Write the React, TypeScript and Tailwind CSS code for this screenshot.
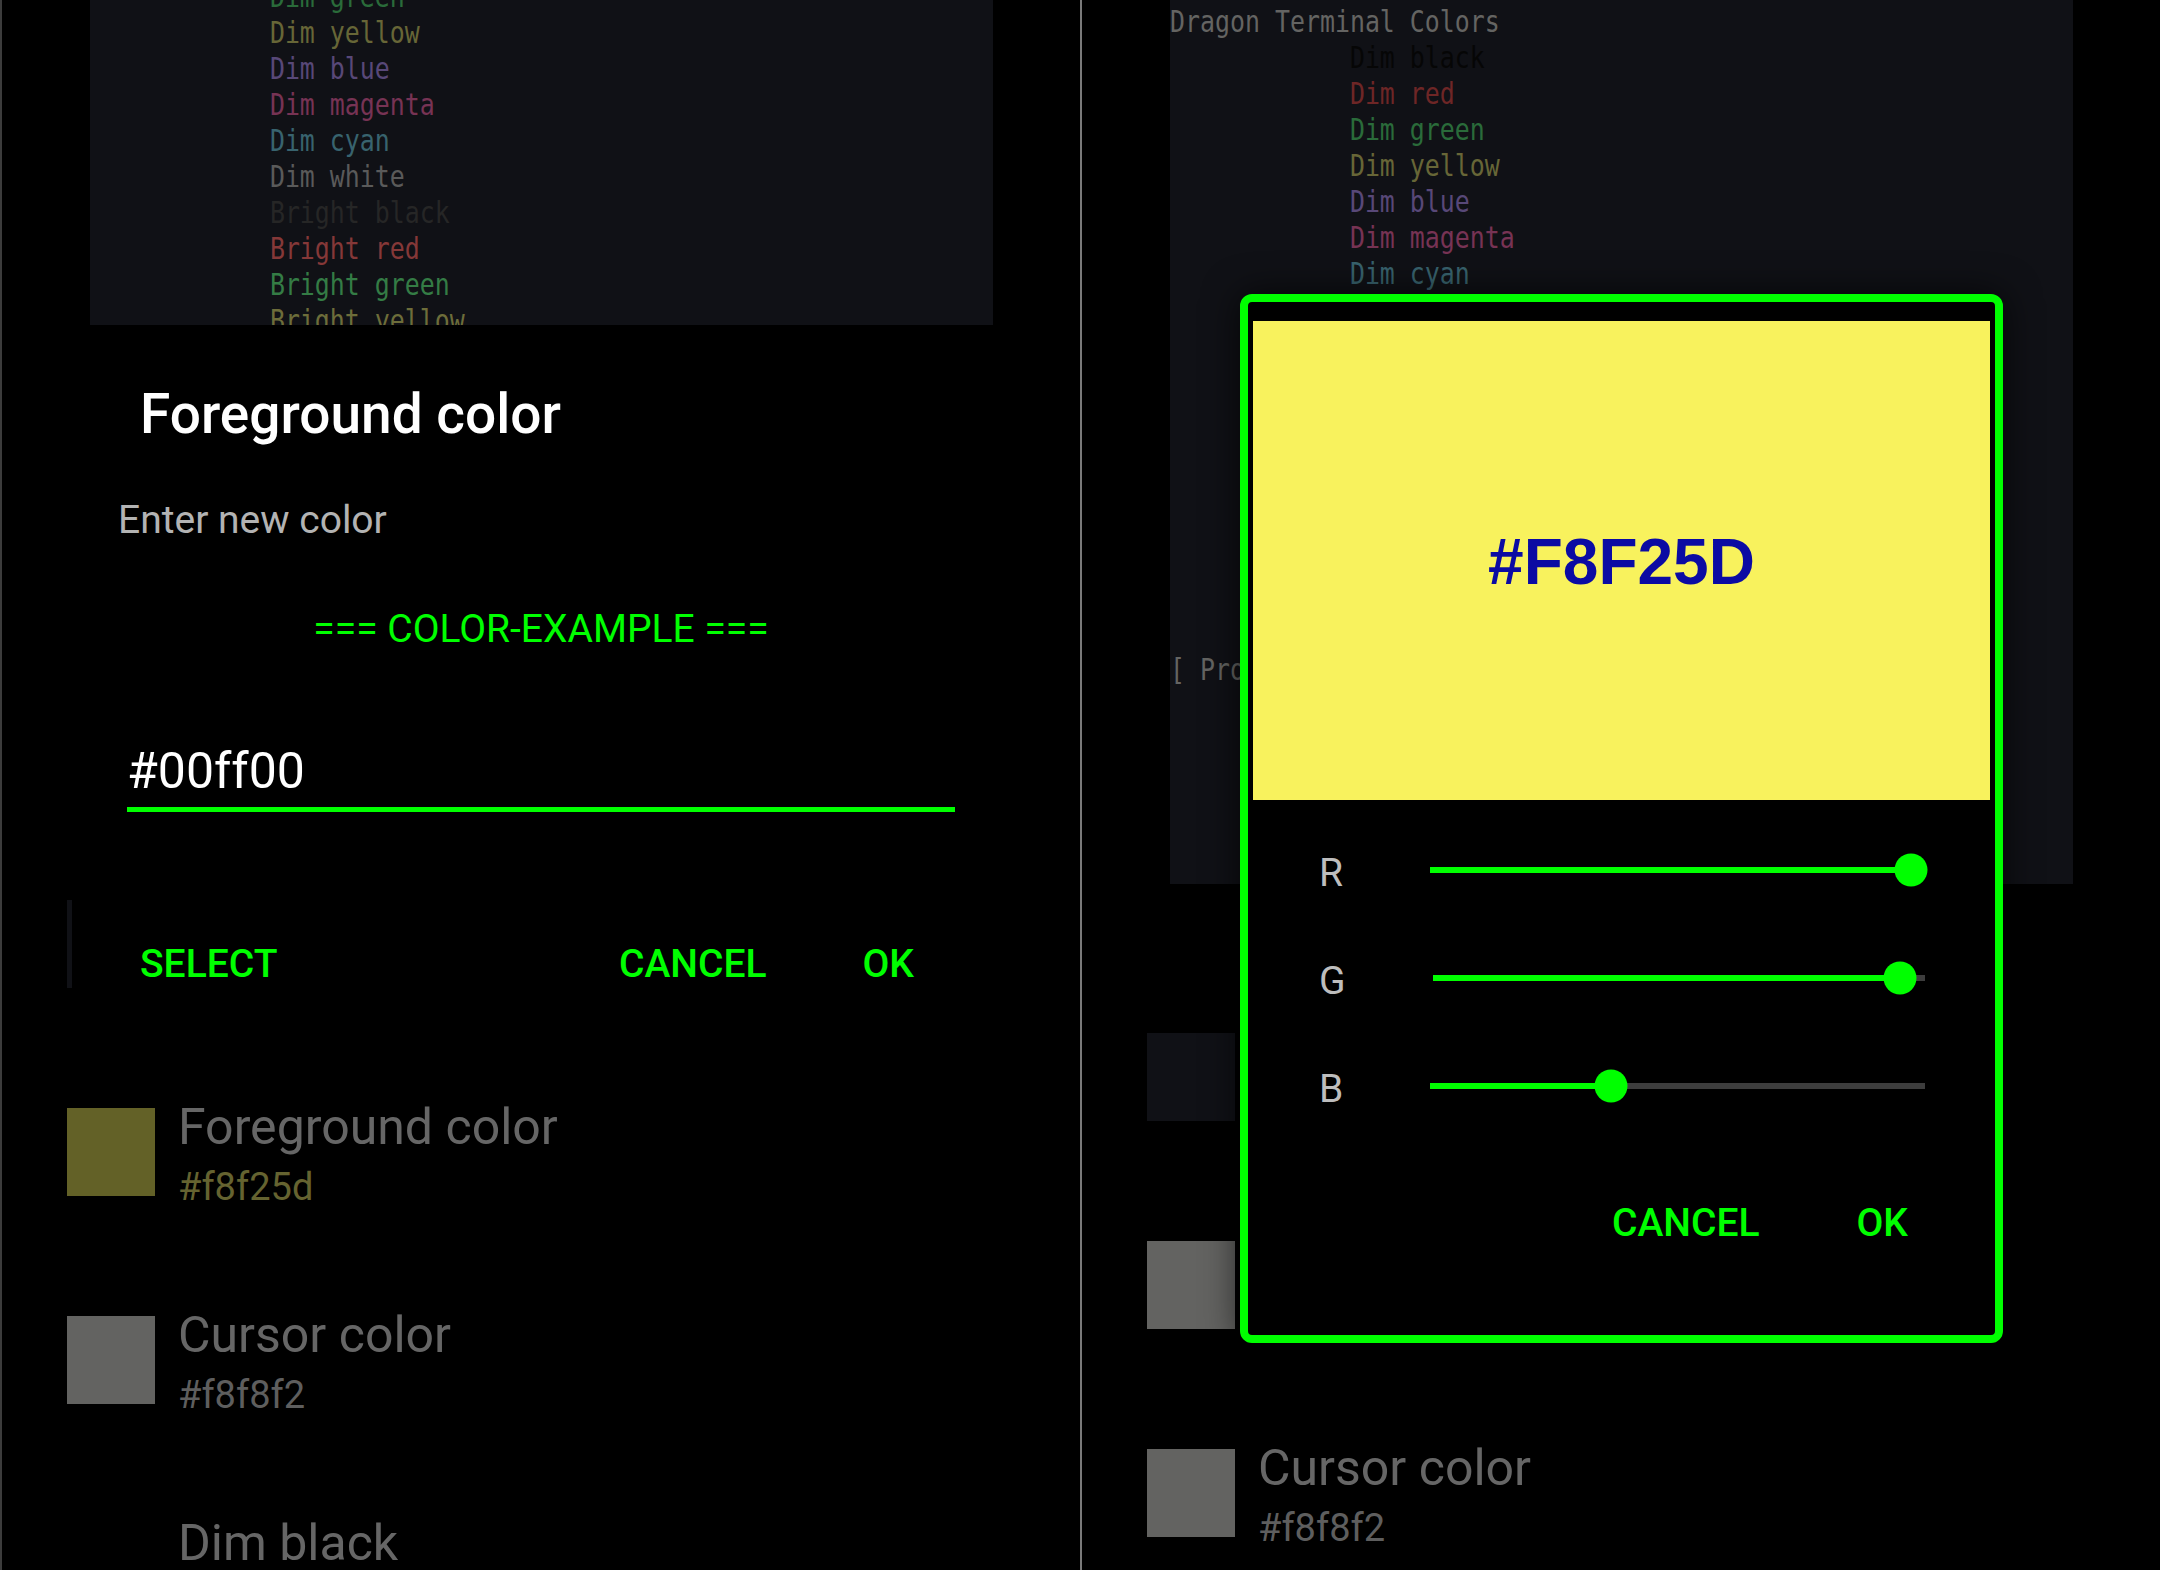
const mono = "font-['DejaVu_Sans_Mono',monospace]";
const sans = "font-['Roboto',sans-serif]";

const INDENT = '            ';

// terminal preview text, colours already dimmed by the dialog scrim
const TERM_LINES = [
  { text: 'Dragon Terminal Colors', cls: 'text-[#646462]' },
  { text: INDENT + 'Dim black', cls: 'text-[#060606]' },
  { text: INDENT + 'Dim red', cls: 'text-[#6e2626]' },
  { text: INDENT + 'Dim green', cls: 'text-[#2a6b3a]' },
  { text: INDENT + 'Dim yellow', cls: 'text-[#676637]' },
  { text: INDENT + 'Dim blue', cls: 'text-[#584878]' },
  { text: INDENT + 'Dim magenta', cls: 'text-[#773354]' },
  { text: INDENT + 'Dim cyan', cls: 'text-[#38636e]' },
  { text: INDENT + 'Dim white', cls: 'text-[#5a5a5a]' },
  { text: INDENT + 'Bright black', cls: 'text-[#262626]' },
  { text: INDENT + 'Bright red', cls: 'text-[#853838]' },
  { text: INDENT + 'Bright green', cls: 'text-[#347c45]' },
  { text: INDENT + 'Bright yellow', cls: 'text-[#6d6d3a]' },
  { text: INDENT + 'Bright blue', cls: 'text-[#62558a]' },
  { text: INDENT + 'Bright magenta', cls: 'text-[#85405f]' },
  { text: INDENT + 'Bright cyan', cls: 'text-[#467480]' },
  { text: INDENT + 'Bright white', cls: 'text-[#646464]' },
  { text: ' ', cls: 'text-[#646462]' },
  { text: '[ Process completed ]', cls: 'text-[#646462]' },
];

type Pref = { title: string; value: string; swatch: string; valueCls: string };

function prefsFor(fgDone: boolean): Pref[] {
  return [
    { title: 'Background color', value: '#282a36', swatch: 'bg-[#101116]', valueCls: 'text-[#5e5e5e]' },
    fgDone
      ? { title: 'Foreground color', value: '#f8f25d', swatch: 'bg-[#636127]', valueCls: 'text-[#656330]' }
      : { title: 'Foreground color', value: '#f8f8f2', swatch: 'bg-[#636361]', valueCls: 'text-[#5e5e5e]' },
    { title: 'Cursor color', value: '#f8f8f2', swatch: 'bg-[#636361]', valueCls: 'text-[#5e5e5e]' },
    { title: 'Dim black', value: '#000000', swatch: 'bg-[#000000]', valueCls: 'text-[#5e5e5e]' },
  ];
}

function Screen({ scrolled }: { scrolled: boolean }) {
  return (
    <div className={scrolled ? '-mt-[133px]' : ''}>
      <div className="ml-[90px] h-[884px] w-[903px] overflow-hidden bg-[#101116]">
        <div className={`${mono} origin-left scale-x-[0.83] whitespace-pre pt-[4px] text-[30px] leading-[36px]`}>
          {TERM_LINES.map((l, i) => (
            <div key={i} className={l.cls}>
              {l.text}
            </div>
          ))}
        </div>
      </div>

      <div className={`${sans} pt-[149px]`}>
        {prefsFor(scrolled).map((p) => (
          <div key={p.title} className="flex h-[208px] items-start">
            <div className={`ml-[67px] size-[88px] shrink-0 ${p.swatch}`} />
            <div className="-mt-[6px] ml-[23px]">
              <div className="text-[50px] leading-[50px] text-[#666666]">{p.title}</div>
              <div className={`mt-[13px] text-[38px] leading-[44px] ${p.valueCls}`}>{p.value}</div>
            </div>
          </div>
        ))}
      </div>
    </div>
  );
}

function TextColorDialog() {
  return (
    <div className={`${sans} absolute left-[72px] top-[325px] h-[719px] w-[935px] bg-black`}>
      <div className="ml-[68px] pt-[57px] text-[55px] font-medium leading-[64px] text-white">Foreground color</div>
      <div className="ml-[46px] mt-[50px] text-[39px] leading-[48px] text-[#b3b3b3]">Enter new color</div>
      <div className="ml-[55px] mt-[63px] w-[828px] text-center text-[39px] leading-[44px] text-[#00ff00]">
        === COLOR-EXAMPLE ===
      </div>
      <div className="ml-[55px] mt-[91px] w-[828px] border-b-[5px] border-[#00ff00] pb-[7px] text-[50px] leading-[58px] text-white">
        #00ff00
      </div>
      <div className="mt-[129px] flex items-center text-[39px] font-medium leading-[46px] text-[#00ff00]">
        <span className="ml-[68px]">SELECT</span>
        <span className="ml-auto">CANCEL</span>
        <span className="ml-[96px] mr-[93px]">OK</span>
      </div>
    </div>
  );
}

const RGB = [
  { label: 'R', value: 0xf8 },
  { label: 'G', value: 0xf2 },
  { label: 'B', value: 0x5d },
];

function PickerDialog() {
  return (
    <div
      className={`${sans} absolute left-[160px] top-[294px] h-[1049px] w-[763px] rounded-[12px] border-[8px] border-[#00ff00] bg-black shadow-[0_0_36px_rgba(0,0,0,0.7)]`}
    >
      <div className="mx-[5px] mt-[19px] flex h-[479px] items-center justify-center bg-[#f8f25d]">
        <span className="mt-[3px] font-['Liberation_Sans',Arial,sans-serif] text-[64px] font-bold text-[#0b0ba3]">
          #F8F25D
        </span>
      </div>

      <div className="mt-[16px]">
        {RGB.map((c) => {
          const pct = `${(c.value / 255) * 100}%`;
          return (
            <div key={c.label} className="flex h-[108px] items-center">
              <span className="ml-[71px] mt-[6px] text-[39px] leading-none text-[#bdbdbd]">{c.label}</span>
              <div className="relative ml-[87px] mr-[70px] h-[6px] flex-1 bg-[#3d3d3d]">
                <div className="h-full bg-[#00ff00]" style={{ width: pct }} />
                <div
                  className="absolute top-1/2 size-[33px] -translate-x-1/2 -translate-y-1/2 rounded-full bg-[#00ff00]"
                  style={{ left: pct }}
                />
              </div>
            </div>
          );
        })}
      </div>

      <div className="mt-[60px] flex justify-end text-[39px] font-medium leading-[46px] text-[#00ff00]">
        <span>CANCEL</span>
        <span className="ml-[97px] mr-[87px]">OK</span>
      </div>
    </div>
  );
}

export default function App() {
  return (
    <div className="flex h-[1570px] w-[2160px] overflow-hidden bg-black">
      <div className="relative h-full w-[1080px] overflow-hidden bg-black shadow-[inset_2px_0_0_#3c3c3c]">
        <Screen scrolled />
        <TextColorDialog />
      </div>
      <div className="relative h-full w-[1080px] overflow-hidden bg-black shadow-[inset_2px_0_0_#7a7a7a]">
        <Screen scrolled={false} />
        <PickerDialog />
      </div>
    </div>
  );
}
